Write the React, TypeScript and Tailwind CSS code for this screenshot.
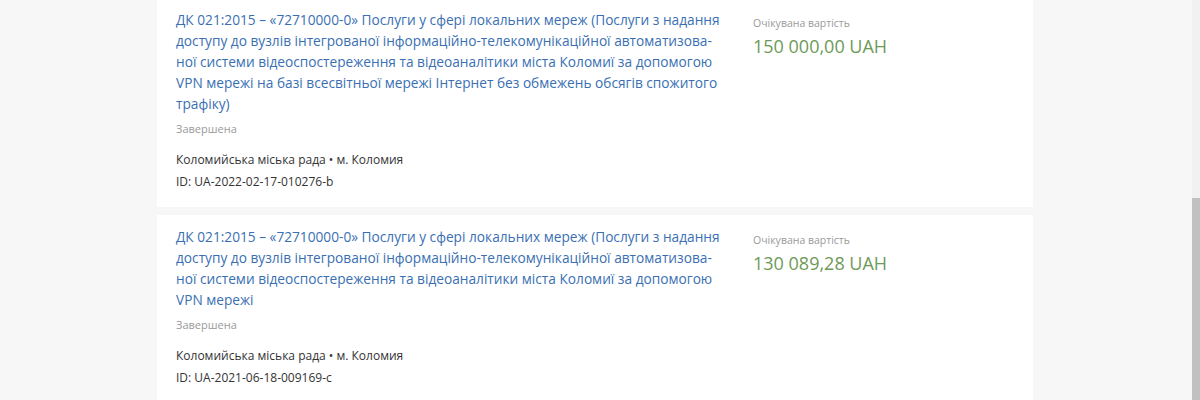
const tenders = [
  {
    lines: [
      'ДК 021:2015 – «72710000-0» Послуги у сфері локальних мереж (Послуги з надання',
      'доступу до вузлів інтегрованої інформаційно-телекомунікаційної автоматизова-',
      'ної системи відеоспостереження та відеоаналітики міста Коломиї за допомогою',
      'VPN мережі на базі всесвітньої мережі Інтернет без обмежень обсягів спожитого',
      'трафіку)',
    ],
    status: 'Завершена',
    buyer: 'Коломийська міська рада • м. Коломия',
    id: 'ID: UA-2022-02-17-010276-b',
    amount: '150 000,00 UAH',
  },
  {
    lines: [
      'ДК 021:2015 – «72710000-0» Послуги у сфері локальних мереж (Послуги з надання',
      'доступу до вузлів інтегрованої інформаційно-телекомунікаційної автоматизова-',
      'ної системи відеоспостереження та відеоаналітики міста Коломиї за допомогою',
      'VPN мережі',
    ],
    status: 'Завершена',
    buyer: 'Коломийська міська рада • м. Коломия',
    id: 'ID: UA-2021-06-18-009169-c',
    amount: '130 089,28 UAH',
  },
];

type Tender = (typeof tenders)[number];

const TenderCard = ({ tender }: { tender: Tender }) => (
  <div className="flex bg-white pl-[19px] pr-[18px] pt-[11px] pb-[14px]">
    <div className="w-[545px] shrink-0">
      <a className="block text-[13.7px] leading-[21px] text-[#3a6fb3]">
        {tender.lines.map((line) => (
          <span key={line} className="block whitespace-nowrap">
            {line}
          </span>
        ))}
      </a>
      <div className="mt-[7px] text-[11px] leading-[16px] text-[#9a9a9a]">{tender.status}</div>
      <div className="mt-[12px] text-[12px] leading-[22px] text-[#333]">
        <div>{tender.buyer}</div>
        <div>{tender.id}</div>
      </div>
    </div>
    <div className="ml-[32px] pt-[6px]">
      <div className="text-[10.5px] leading-[16px] text-[#9a9a9a]">Очікувана вартість</div>
      <div className="mt-[2px] text-[18px] leading-[26px] text-[#6d9a57]">{tender.amount}</div>
    </div>
  </div>
);

export default function App() {
  return (
    <div className="relative h-[400px] w-[1200px] overflow-hidden bg-[#f7f7f7] font-['Open_Sans',sans-serif]">
      <div className="ml-[157px] mt-[-2px] flex w-[876px] flex-col gap-[8px]">
        {tenders.map((tender) => (
          <TenderCard key={tender.id} tender={tender} />
        ))}
      </div>
      <div className="absolute right-0 top-0 h-full w-[8px] bg-[#f1f1f1]">
        <div className="mt-[198px] h-[202px] w-full bg-[#c1c1c1]" />
      </div>
    </div>
  );
}
